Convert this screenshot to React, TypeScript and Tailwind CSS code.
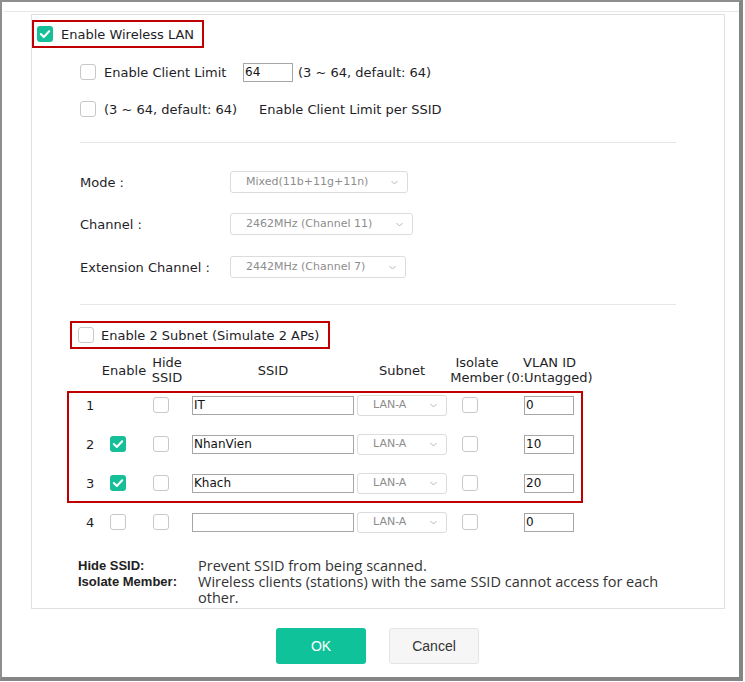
import React from "react";

function Box({ checked }: { checked?: boolean }) {
  if (checked) {
    return (
      <span className="w-4 h-4 rounded-[3px] bg-[#17bf98] flex items-center justify-center shrink-0">
        <svg width="12" height="10" viewBox="0 0 12 10">
          <path d="M1.8 5 L4.8 8 L10.2 2.2" stroke="white" strokeWidth="2" fill="none" strokeLinecap="round" strokeLinejoin="round" />
        </svg>
      </span>
    );
  }
  return <span className="w-4 h-4 rounded-[3px] border border-[#c8c8c8] bg-white shrink-0" />;
}

function Chevron() {
  return (
    <svg width="7" height="5" viewBox="0 0 7 5" className="shrink-0">
      <path d="M0.5 1 L3.5 4 L6.5 1" stroke="#b8b8b8" strokeWidth="1" fill="none" />
    </svg>
  );
}

function Select({ value, w, pl = "pl-[15px]", pr = "pr-[9px]" }: { value: string; w: string; pl?: string; pr?: string }) {
  return (
    <div className={`${w} h-full border border-[#dcdcdc] rounded-[3px] bg-white flex items-center justify-between ${pl} ${pr} text-[11px] text-[#8d8d8d]`}>
      <span className="whitespace-nowrap pt-px">{value}</span>
      <Chevron />
    </div>
  );
}

function Input({ value, w }: { value: string; w: string }) {
  return (
    <div className={`${w} h-[19px] border border-[#a6a6a6] bg-white flex items-center pl-px text-[12px] text-[#111]`}>
      {value}
    </div>
  );
}

type Row = { n: number; enable: "none" | "on" | "off"; ssid: string; vlan: string };

const rows: Row[] = [
  { n: 1, enable: "none", ssid: "IT", vlan: "0" },
  { n: 2, enable: "on", ssid: "NhanVien", vlan: "10" },
  { n: 3, enable: "on", ssid: "Khach", vlan: "20" },
  { n: 4, enable: "off", ssid: "", vlan: "0" },
];

function SsidRow({ row }: { row: Row }) {
  return (
    <div className="h-[24px] flex items-center">
      <div className="w-[41px] pl-[17px] pt-px">{row.n}</div>
      <div className="w-[43px] flex">{row.enable !== "none" && <Box checked={row.enable === "on"} />}</div>
      <div className="w-[39px] flex">
        <Box />
      </div>
      <Input value={row.ssid} w="w-[162px]" />
      <div className="ml-[3px] h-[21px]">
        <Select value="LAN-A" w="w-[90px]" pl="pl-[15px]" pr="pr-[9px]" />
      </div>
      <div className="ml-[15px] w-[62px] flex">
        <Box />
      </div>
      <Input value={row.vlan} w="w-[50px]" />
    </div>
  );
}

export default function App() {
  return (
    <div className="w-[745px] h-[682px] bg-white overflow-hidden font-['DejaVu_Sans',sans-serif] text-[13px] text-[#1e1e28]">
      <div className="w-[743px] h-[681px] border-t-2 border-l-2 border-[#8e8e8e] border-r-[4px] border-b-[4px] border-r-[#858585] border-b-[#858585] flex flex-col">
        <div className="mt-[9px] ml-[2px] h-px bg-[#e8e8e8]" />

        <div className="mt-[2px] ml-[29px] w-[694px] h-[595px] border border-[#e0e0e0] flex flex-col">
          <div className="mt-[5px] w-[172px] h-[28px] border-2 border-[#c00000] flex items-center pl-[3px] gap-2">
            <Box checked />
            <span className="whitespace-nowrap pt-[2px]">Enable Wireless LAN</span>
          </div>

          <div className="mt-[12px] h-[24px] pl-[48px] flex items-center gap-2">
            <Box />
            <span className="w-[131px] whitespace-nowrap pt-px">Enable Client Limit</span>
            <Input value="64" w="w-[50px]" />
            <span className="ml-[-3px] whitespace-nowrap pt-px">(3 ~ 64, default: 64)</span>
          </div>

          <div className="mt-[13px] h-[24px] pl-[48px] flex items-center gap-2">
            <Box />
            <span className="w-[147px] whitespace-nowrap pt-px">(3 ~ 64, default: 64)</span>
            <span className="whitespace-nowrap pt-px">Enable Client Limit per SSID</span>
          </div>

          <div className="mt-[21px] ml-[48px] w-[596px] h-px bg-[#e6e6e6]" />

          <div className="mt-[28px] h-[22px] pl-[48px] flex items-center">
            <span className="w-[150px] pt-px">Mode :</span>
            <Select value="Mixed(11b+11g+11n)" w="w-[178px]" />
          </div>
          <div className="mt-[20px] h-[22px] pl-[48px] flex items-center">
            <span className="w-[150px] pt-px">Channel :</span>
            <Select value="2462MHz (Channel 11)" w="w-[183px]" />
          </div>
          <div className="mt-[21px] h-[22px] pl-[48px] flex items-center">
            <span className="w-[150px] whitespace-nowrap pt-px">Extension Channel :</span>
            <Select value="2442MHz (Channel 7)" w="w-[176px]" />
          </div>

          <div className="mt-[26px] ml-[48px] w-[596px] h-px bg-[#e6e6e6]" />

          <div className="mt-[16px] ml-[38px] w-[260px] h-[28px] border-2 border-[#c00000] flex items-center pl-[6px] gap-[7px]">
            <Box />
            <span className="whitespace-nowrap pt-px">Enable 2 Subnet (Simulate 2 APs)</span>
          </div>

          <div className="mt-[6px] h-[30px] ml-[68px] flex leading-[15px]">
            <div className="w-[48px] flex items-center justify-center">Enable</div>
            <div className="w-[38px] flex flex-col items-center justify-center">
              <span>Hide</span>
              <span>SSID</span>
            </div>
            <div className="ml-[6px] w-[162px] flex items-center justify-center">SSID</div>
            <div className="ml-[3px] w-[90px] flex items-center justify-center">Subnet</div>
            <div className="ml-[2px] w-[56px] flex flex-col items-center justify-center">
              <span>Isolate</span>
              <span className="whitespace-nowrap">Member</span>
            </div>
            <div className="w-[89px] flex flex-col items-center justify-center">
              <span className="whitespace-nowrap">VLAN ID</span>
              <span className="whitespace-nowrap">(0:Untagged)</span>
            </div>
          </div>

          <div className="mt-[6px] ml-[35px] w-[516px] h-[112px] border-2 border-[#c00000] flex flex-col gap-[15px]">
            {rows.slice(0, 3).map((r) => (
              <SsidRow key={r.n} row={r} />
            ))}
          </div>
          <div className="mt-[7px] ml-[37px]">
            <SsidRow row={rows[3]} />
          </div>

          <div className="mt-[24px] ml-[46px] flex leading-[16px]">
            <div className="w-[120px] flex flex-col font-['Liberation_Sans_Narrow','Liberation_Sans',sans-serif] font-bold text-[13px] text-[#222]">
              <span>Hide SSID:</span>
              <span>Isolate Member:</span>
            </div>
            <div className="w-[482px] font-['Open_Sans',sans-serif] text-[14.5px] text-[#333] leading-[16px]">
              <div>Prevent SSID from being scanned.</div>
              <div>Wireless clients (stations) with the same SSID cannot access for each other.</div>
            </div>
          </div>
        </div>

        <div className="mt-[19px] ml-[274px] flex gap-[23px] font-['Liberation_Sans',sans-serif] text-[14px]">
          <div className="w-[90px] h-[36px] rounded-[3px] bg-[#0fc299] text-white flex items-center justify-center">OK</div>
          <div className="w-[90px] h-[36px] rounded-[3px] bg-[#f6f6f6] border border-[#e3e3e3] text-[#333] flex items-center justify-center">
            Cancel
          </div>
        </div>
      </div>
    </div>
  );
}
